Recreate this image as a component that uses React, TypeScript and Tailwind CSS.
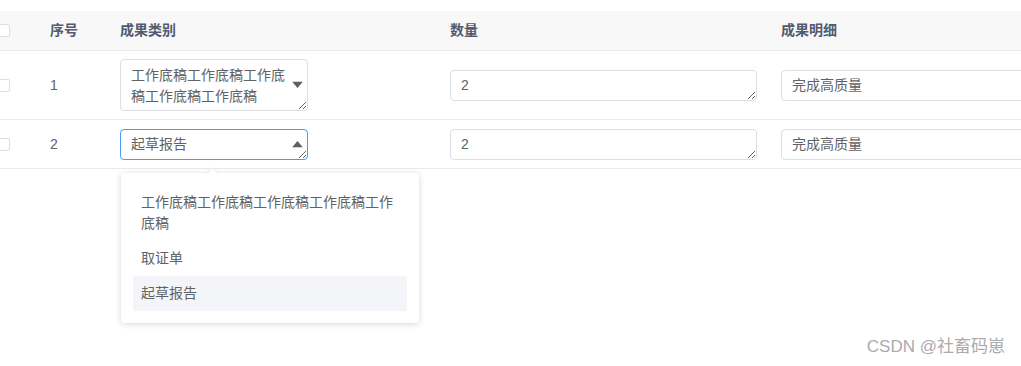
const font = "font-['Liberation_Sans','Noto_Sans_CJK_SC',sans-serif]";

const cols = "grid grid-cols-[50px_70px_330px_331px_320px] items-center";

function Checkbox() {
  return <span className="-ml-[3px] block h-[13px] w-[13px] rounded-[2px] border border-[#dcdee2] bg-white" />;
}

function Caret({ up }: { up?: boolean }) {
  return (
    <svg
      width="11"
      height="7"
      viewBox="0 0 11 7"
      className="pointer-events-none absolute right-[5px] top-1/2 -translate-y-1/2"
    >
      <polygon points={up ? "0,7 11,7 5.5,0.5" : "0,0 11,0 5.5,6.5"} fill="#5c5f66" />
    </svg>
  );
}

function Box({ value, height, active, width }: { value: string; height: number; active?: boolean; width: string }) {
  return (
    <textarea
      readOnly
      value={value}
      style={{ height }}
      className={`${width} block resize overflow-hidden rounded-[4px] border bg-white px-[10px] text-[14px] leading-[21px] text-[#606266] outline-none ${
        active ? "border-[#4a9cf3]" : "border-[#dcdee2]"
      } ${height > 40 ? "pb-[3px] pr-[22px] pt-[5px]" : "py-[4px] pr-[22px]"}`}
    />
  );
}

const options = ["工作底稿工作底稿工作底稿工作底稿工作底稿", "取证单", "起草报告"];

export default function App() {
  return (
    <div className={`relative h-[366px] w-[1021px] overflow-hidden bg-white ${font}`}>
      <div className="w-[1101px] pt-[11px]">
        <div className={`${cols} h-[40px] border-b border-[#e8eaec] bg-[#f8f8f9] text-[14px] font-bold text-[#515a6e]`}>
          <Checkbox />
          <span>序号</span>
          <span>成果类别</span>
          <span>数量</span>
          <span>成果明细</span>
        </div>

        <div className={`${cols} h-[69px] border-b border-[#e8eaec] text-[14px] text-[#606266]`}>
          <Checkbox />
          <span>1</span>
          <div className="relative w-[188px]">
            <Box value="工作底稿工作底稿工作底稿工作底稿工作底稿" height={52} width="w-[188px]" />
            <Caret />
          </div>
          <Box value="2" height={31} width="w-[307px]" />
          <Box value="完成高质量" height={31} width="w-[310px]" />
        </div>

        <div className={`${cols} h-[49px] border-b border-[#e8eaec] text-[14px] text-[#606266]`}>
          <Checkbox />
          <span>2</span>
          <div className="relative w-[188px]">
            <Box value="起草报告" height={31} width="w-[188px]" active />
            <Caret up />
            <div className="absolute left-[1px] top-[44px] z-10 w-[298px] rounded-[4px] bg-white p-[12px] shadow-[0_1px_6px_rgba(0,0,0,0.16)]">
              <span className="absolute -top-[4px] left-[87px] h-[9px] w-[9px] rotate-45 border-l border-t border-[#ececef] bg-white" />
              {options.map((o, i) => (
                <div
                  key={o}
                  className={`px-[8px] py-[7px] text-[14px] leading-[21px] text-[#606266] ${
                    i === 2 ? "bg-[#f3f5f9]" : ""
                  }`}
                >
                  {o}
                </div>
              ))}
            </div>
          </div>
          <Box value="2" height={31} width="w-[307px]" />
          <Box value="完成高质量" height={31} width="w-[310px]" />
        </div>
      </div>

      <div className="absolute bottom-[8px] right-[16px] text-[17px] leading-[22px] text-[#ababab]">CSDN @社畜码崽</div>
    </div>
  );
}
